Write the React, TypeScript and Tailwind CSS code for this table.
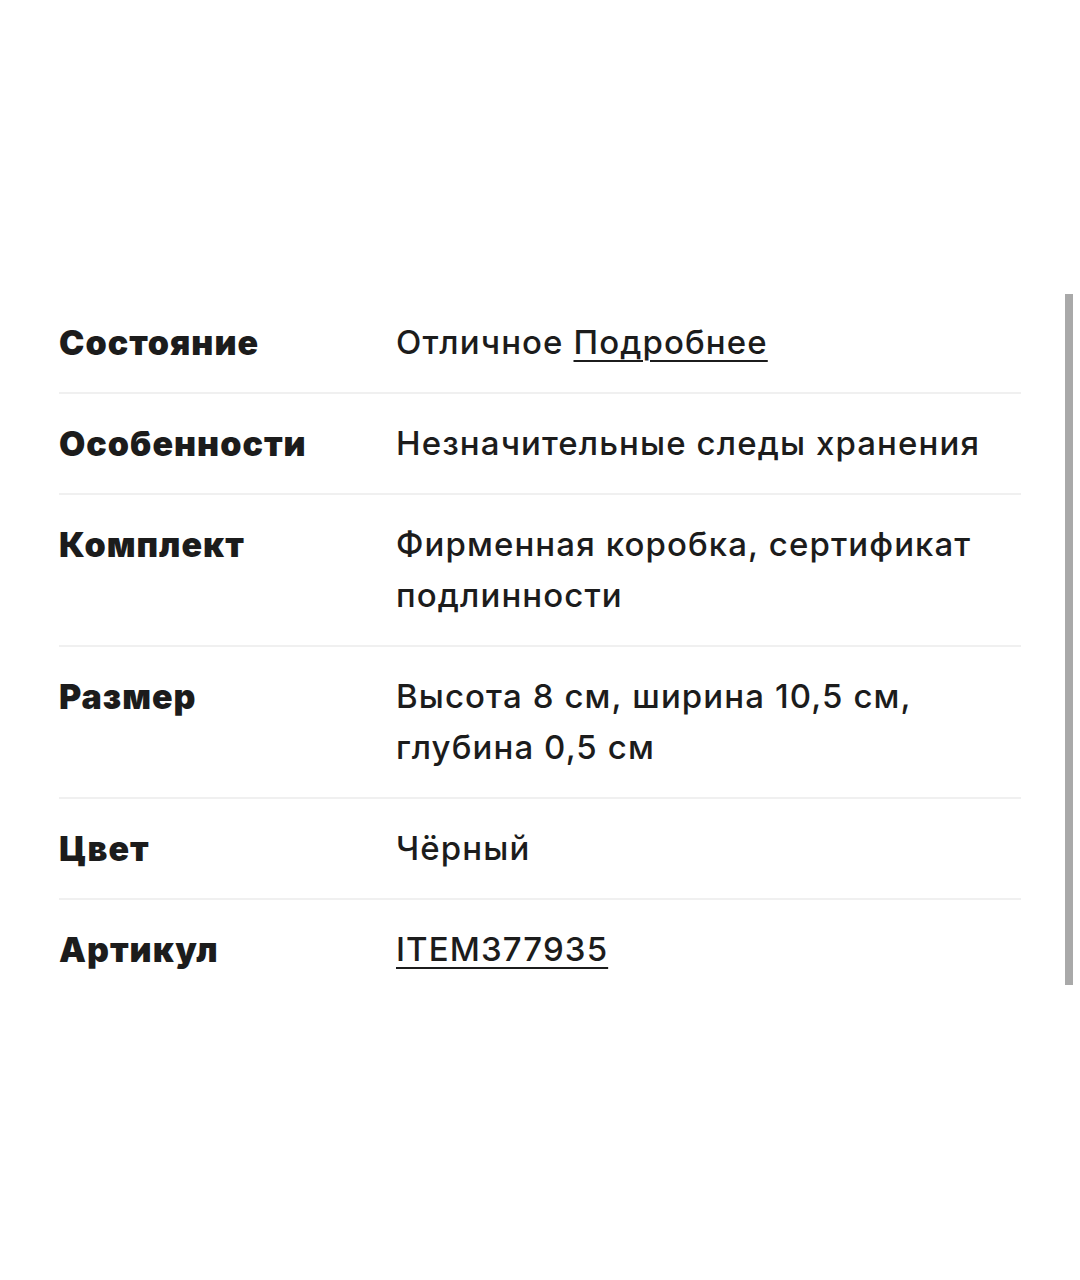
import React from "react";

const rows: { label: string; value: React.ReactNode }[] = [
  {
    label: "Состояние",
    value: (
      <>
        Отличное <span className="underline decoration-2 underline-offset-[6px]">Подробнее</span>
      </>
    ),
  },
  { label: "Особенности", value: "Незначительные следы хранения" },
  { label: "Комплект", value: "Фирменная коробка, сертификат подлинности" },
  { label: "Размер", value: "Высота 8 см, ширина 10,5 см, глубина 0,5 см" },
  { label: "Цвет", value: "Чёрный" },
  {
    label: "Артикул",
    value: <span className="underline decoration-2 underline-offset-[6px]">ITEM377935</span>,
  },
];

export default function App() {
  return (
    <div className="w-[1080px] h-[1280px] bg-white relative text-[#1c1c1c]" style={{ fontFamily: "Inter, 'Noto Sans', sans-serif" }}>
      <div className="pt-[293px] pl-[59px] w-[1021px]">
        {rows.map((r, i) => (
          <div
            key={r.label}
            className={`flex py-[24px] ${i < rows.length - 1 ? "border-b-2 border-[#f0f0f0]" : ""}`}
          >
            <div className="w-[337px] shrink-0 text-[34px] leading-[51px] font-black tracking-[1px]">
              {r.label}
            </div>
            <div className="w-[600px] text-[33px] leading-[51px] font-medium tracking-[1.1px]">{r.value}</div>
          </div>
        ))}
      </div>
      <div className="absolute left-[1065px] top-[294px] w-[8px] h-[691px] bg-[#a9a9a9]" />
    </div>
  );
}
